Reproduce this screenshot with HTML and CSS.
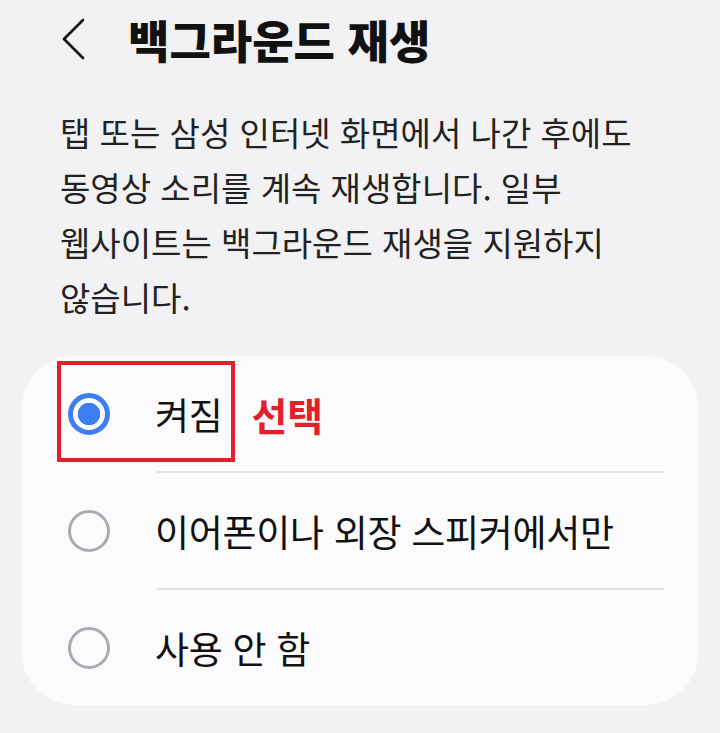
FILE: index.html
```html
<!DOCTYPE html>
<html lang="ko">
<head>
<meta charset="utf-8">
<title>백그라운드 재생</title>
<link rel="stylesheet" href="styles.css">
</head>
<body>
  <header class="app-bar">
    <button class="back" aria-label="뒤로">
      <svg width="24" height="42" viewBox="0 0 24 42" fill="none" stroke="#111" stroke-width="2.6" stroke-linecap="round" stroke-linejoin="round">
        <path d="M22 2 L3 21 L22 40"/>
      </svg>
    </button>
    <h1 class="title">백그라운드 재생</h1>
  </header>

  <p class="desc">탭 또는 삼성 인터넷 화면에서 나간 후에도 동영상 소리를 계속 재생합니다. 일부 웹사이트는 백그라운드 재생을 지원하지 않습니다.</p>

  <section class="card">
    <div class="row">
      <span class="radio radio-on"></span>
      <span class="label">켜짐</span>
      <span class="note">선택</span>
      <span class="mark"></span>
    </div>
    <div class="divider"></div>
    <div class="row">
      <span class="radio"></span>
      <span class="label">이어폰이나 외장 스피커에서만</span>
    </div>
    <div class="divider"></div>
    <div class="row">
      <span class="radio"></span>
      <span class="label">사용 안 함</span>
    </div>
  </section>
</body>
</html>
```

FILE: styles.css
```css
html, body {
  margin: 0;
  padding: 0;
}

body {
  width: 720px;
  height: 733px;
  overflow: hidden;
  background: #f2f2f4;
  font-family: "Noto Sans CJK KR", "Noto Sans", sans-serif;
  color: #111;
}

.app-bar {
  display: flex;
  align-items: center;
  height: 78px;
  padding-left: 61px;
}

.back {
  display: flex;
  width: 24px;
  height: 42px;
  padding: 0;
  border: 0;
  background: none;
}

.title {
  margin: 0 0 0 43px;
  font-size: 45px;
  font-weight: 900;
  line-height: 1;
}

.desc {
  margin: 27px 60px 0 60px;
  width: 585px;
  font-size: 33px;
  line-height: 55px;
  color: #222;
  word-break: keep-all;
}

.card {
  position: relative;
  margin: 31px 22px 0 22px;
  height: 349px;
  background: #fbfbfd;
  border-radius: 52px;
  overflow: hidden;
}

.row {
  position: relative;
  display: flex;
  align-items: center;
  height: 115px;
  padding-left: 46px;
}

.radio {
  box-sizing: border-box;
  width: 42px;
  height: 42px;
  border: 3px solid #ababaf;
  border-radius: 50%;
  flex: none;
}

.radio-on {
  border: 5px solid #3d7ef0;
  background: radial-gradient(circle, #3d7ef0 0 11px, transparent 11.5px);
}

.label {
  margin-left: 45px;
  font-size: 37px;
  letter-spacing: -0.3px;
  color: #111;
}

.note {
  margin-left: 29px;
  font-size: 39px;
  font-weight: 700;
  color: #e21f2b;
}

.mark {
  position: absolute;
  left: 35px;
  top: 5px;
  width: 178px;
  height: 101px;
  box-sizing: border-box;
  border: 4px solid #e21f2b;
}

.divider {
  height: 2px;
  margin: 0 34px 0 135px;
  background: #e3e3e6;
}
```
